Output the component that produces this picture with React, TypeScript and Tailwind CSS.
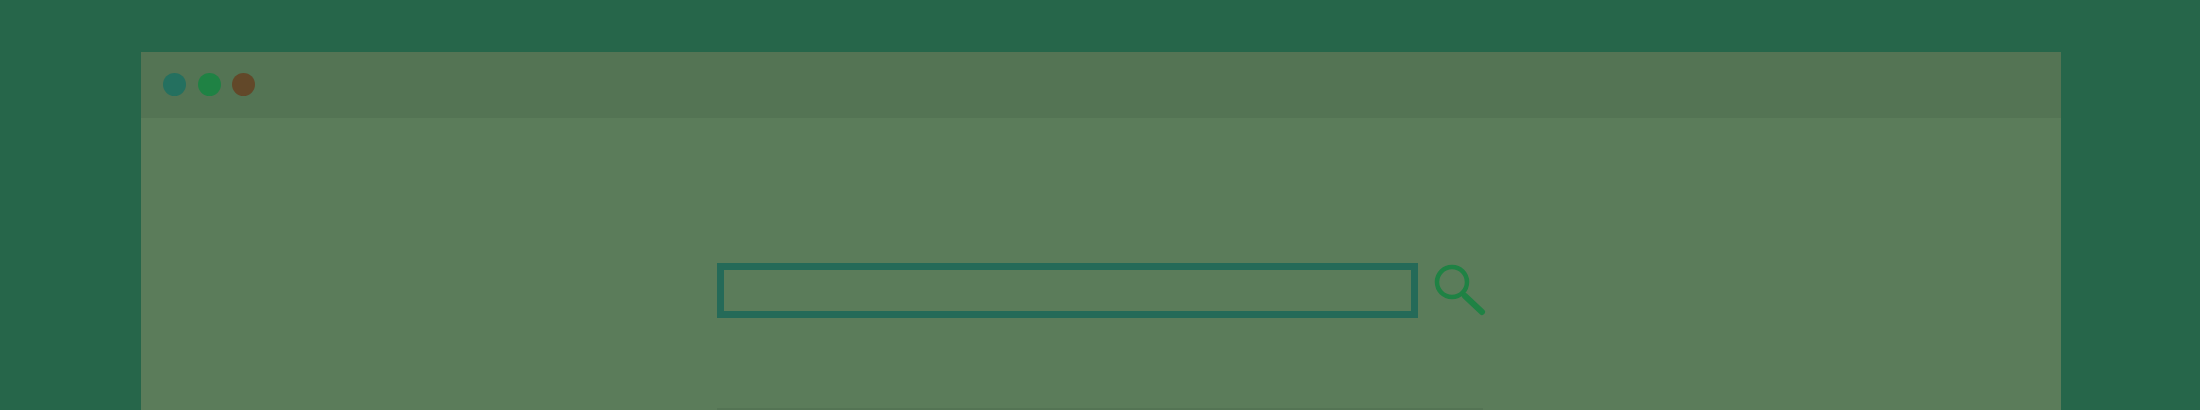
export default function App() {
  return (
    <div className="h-[410px] w-[2200px] overflow-hidden bg-[#26664a] pl-[141px] pr-[139px] pt-[52px]">
      <div className="h-[358px] bg-[#5b7c5a]">
        <div className="flex h-[66px] items-center gap-[11.5px] bg-[#547454] pb-[1px] pl-[22px]">
          <div className="h-[23px] w-[23px] rounded-full bg-[#24705f]" />
          <div className="h-[23px] w-[23px] rounded-full bg-[#1f8244]" />
          <div className="h-[23px] w-[23px] rounded-full bg-[#624829]" />
        </div>
        <div className="ml-[576px] w-[770px] pt-[145px]">
          <div className="flex items-start">
            <div className="h-[55px] w-[701px] shrink-0 border-[7px] border-[#256a58]" />
            <svg className="ml-[14px] shrink-0" width="55" height="54" viewBox="0 0 55 54" fill="none" stroke="#1f8244">
              <circle cx="20" cy="19" r="15" strokeWidth="4.5" />
              <path d="M33 33 L50 49" strokeWidth="6" strokeLinecap="round" />
            </svg>
          </div>
          <div className="mt-[90px] h-[2px] w-[766px] bg-[#547454]" />
        </div>
      </div>
    </div>
  );
}
